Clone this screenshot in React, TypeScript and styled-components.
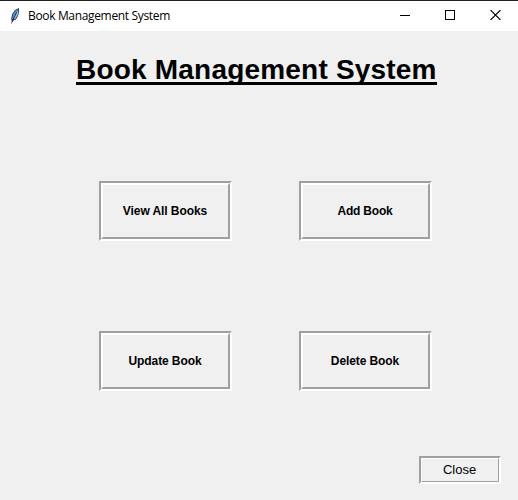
import React from "react";
import styled, { createGlobalStyle } from "styled-components";

const GlobalStyle = createGlobalStyle`
  * { box-sizing: border-box; }
  body { margin: 0; background: #f0f0f0; }
`;

const Window = styled.div`
  display: flex;
  flex-direction: column;
  width: 518px;
  height: 500px;
  overflow: hidden;
  background: #f0f0f0;
  border-top: 1px solid #202020;
  color: #000;
  font-family: "Liberation Sans", Arial, sans-serif;
`;

const TitleBar = styled.header`
  display: flex;
  align-items: center;
  height: 30px;
  flex: none;
  padding-left: 7px;
  background: #fff;
`;

const Caption = styled.span`
  flex: 1;
  margin-left: 5px;
  font: 12px/16px "Open Sans", "Noto Sans", sans-serif;
  letter-spacing: -0.34px;
  white-space: nowrap;
`;

const Control = styled.button<{ $nudge?: number }>`
  display: flex;
  align-items: center;
  justify-content: center;
  width: 45px;
  height: 30px;
  padding: 0 ${(p) => p.$nudge ?? 0}px 2px 0;
  border: 0;
  background: transparent;
`;

const Body = styled.main`
  display: flex;
  flex-direction: column;
  flex: 1;
`;

const Heading = styled.h1`
  width: 361px;
  height: 31px;
  margin: 23px 0 0 76px;
  border-bottom: 3px solid #000;
  font-size: 28px;
  line-height: 31px;
  font-weight: bold;
  letter-spacing: 0.2px;
  white-space: nowrap;
`;

const Actions = styled.section`
  display: grid;
  grid-template-columns: 133px 133px;
  grid-auto-rows: 60px;
  gap: 90px 67px;
  margin: 96px 0 0 99px;
`;

const Groove = styled.button`
  display: flex;
  padding: 0;
  background: #f0f0f0;
  border: 2px solid;
  border-color: #a0a0a0 #fff #fff #a0a0a0;
  font-family: inherit;
  color: #000;
`;

const Face = styled.span<{ $inner: number; $size: number; $spacing: number; $bold?: boolean }>`
  display: flex;
  flex: 1;
  align-self: stretch;
  align-items: center;
  justify-content: center;
  padding-right: 1px;
  border: ${(p) => p.$inner}px solid;
  border-color: #fff #a0a0a0 #a0a0a0 #fff;
  font-size: ${(p) => p.$size}px;
  line-height: 14px;
  font-weight: ${(p) => (p.$bold ? "bold" : "normal")};
  letter-spacing: ${(p) => p.$spacing}px;
  white-space: nowrap;
`;

const Footer = styled.footer`
  display: grid;
  grid-template: 28px / 82px;
  justify-content: end;
  margin-top: 65px;
  padding-right: 17px;
`;

const Feather = () => (
  <svg width="16" height="18" viewBox="0 0 16 18">
    <path d="M5 15.5 L4.2 11.5 L5.2 7 L8 3 L11.8 1 L12.2 4.5 L11 9 L8.8 12.5 L5.8 14 Z" fill="#26344f" />
    <path d="M5.1 11.8 L6.1 7.3 L8.4 3.8 L11 1.9 L8.8 7 L6 12.2 Z" fill="#5f95d6" />
    <path d="M7.8 10 L11 2.8 L11.5 5 L10.4 8.6 L8.5 11.6 L6.5 12.8 Z" fill="#8fbcf0" />
    <path d="M4.4 16.5 L6 12.5 L9.6 5" fill="none" stroke="#202a3c" strokeWidth="0.7" />
  </svg>
);

const actions = [
  { label: "View All Books", spacing: -0.07 },
  { label: "Add Book", spacing: -0.2 },
  { label: "Update Book", spacing: -0.1 },
  { label: "Delete Book", spacing: -0.1 },
];

export default function App() {
  return (
    <Window>
      <GlobalStyle />
      <TitleBar>
        <Feather />
        <Caption>Book Management System</Caption>
        <Control aria-label="Minimize" $nudge={1}>
          <svg width="10" height="10" shapeRendering="crispEdges"><path d="M0 5.5H10" stroke="#000" /></svg>
        </Control>
        <Control aria-label="Maximize" $nudge={1}>
          <svg width="10" height="10" shapeRendering="crispEdges"><path d="M.5.5H9.5V9.5H.5Z" fill="none" stroke="#000" /></svg>
        </Control>
        <Control aria-label="Close window">
          <svg width="11" height="10"><path d="M.5 0L10.5 10M10.5 0L.5 10" stroke="#000" strokeWidth="1.1" /></svg>
        </Control>
      </TitleBar>
      <Body>
        <Heading>Book Management System</Heading>
        <Actions>
          {actions.map((a) => (
            <Groove key={a.label}>
              <Face $inner={2} $size={12} $spacing={a.spacing} $bold>{a.label}</Face>
            </Groove>
          ))}
        </Actions>
        <Footer>
          <Groove>
            <Face $inner={1} $size={13} $spacing={0}>Close</Face>
          </Groove>
        </Footer>
      </Body>
    </Window>
  );
}
